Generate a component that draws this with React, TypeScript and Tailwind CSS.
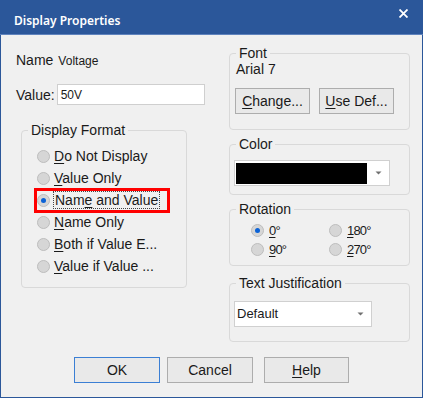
import React from "react";

const U = ({ c }: { c: string }) => (
  <span className="underline underline-offset-2 decoration-1">{c}</span>
);

function Radio({ checked }: { checked?: boolean }) {
  return (
    <span className="w-[13px] h-[13px] rounded-full border border-[#bdbdbd] bg-[#d6d6d6] flex items-center justify-center shrink-0">
      {checked && <span className="w-[5px] h-[5px] rounded-full bg-[#0b62d6]" />}
    </span>
  );
}

function Arrow() {
  return (
    <svg width="7" height="4" viewBox="0 0 7 4" className="shrink-0">
      <path d="M0.5 0.5 L6.5 0.5 L3.5 3.5 Z" fill="#707070" />
    </svg>
  );
}

function Group({
  title,
  className,
  inner,
  children,
}: {
  title: string;
  className: string;
  inner: string;
  children: React.ReactNode;
}) {
  return (
    <fieldset className={"border border-[#d9d9d9] rounded-[4px] " + className}>
      <legend className="ml-[6px] px-[3px] leading-[14px] text-[14px] text-[#1a1a1a]">{title}</legend>
      <div className={inner}>{children}</div>
    </fieldset>
  );
}

function Btn({ children, w, cls }: { children: React.ReactNode; w: string; cls?: string }) {
  return (
    <div
      className={
        "h-[26px] flex items-center justify-center text-[14px] leading-[16px] text-[#1a1a1a] bg-[#e9e9e9] " +
        w +
        " " +
        (cls ?? "border border-[#adadad]")
      }
    >
      {children}
    </div>
  );
}

export default function App() {
  const rows: { label: React.ReactNode; checked?: boolean; focus?: boolean }[] = [
    { label: <><U c="D" />o Not Display</> },
    { label: <><U c="V" />alue Only</> },
    { label: <>Nam<U c="e" /> and Value</>, checked: true, focus: true },
    { label: <><U c="N" />ame Only</> },
    { label: <><U c="B" />oth if Value E...</> },
    { label: <><U c="V" />alue if Value ...</> },
  ];
  return (
    <div className="w-[423px] h-[398px] bg-[#2b579a] flex flex-col font-['Liberation_Sans',Arial,sans-serif]">
      <div className="h-[34px] flex justify-between text-white shrink-0">
        <div className="pl-[14px] pt-[13px] text-[12px] leading-[16px] font-semibold font-['Noto_Sans',sans-serif]">Display Properties</div>
        <svg className="mt-[9px] mr-[15px]" width="9" height="9" viewBox="0 0 9 9">
          <path d="M0.5 0.5 L8.5 8.5 M8.5 0.5 L0.5 8.5" stroke="white" strokeWidth="1.8" />
        </svg>
      </div>
      <div className="h-[1px] bg-[#5f83bd] shrink-0" />
      <div className="flex-1 mx-[1px] mb-[1px] bg-[#f0f0f0] flex flex-col text-[#1a1a1a]">
        <div className="h-[322px] flex pt-[10px] shrink-0">
          {/* Left column */}
          <div className="w-[191px] ml-[15px] mt-[7px] flex flex-col">
            <div className="h-[16px] flex items-baseline leading-[16px]">
              <span className="text-[14px]">Name</span>
              <span className="text-[12px] ml-[5px]">Voltage</span>
            </div>
            <div className="mt-[16px] h-[21px] flex items-center">
              <span className="text-[14px] leading-[16px]">Value:</span>
              <div className="ml-[2px] w-[148px] h-[21px] border border-[#cfcfcf] bg-white text-[12px] pl-[3px] flex items-center">
                50V
              </div>
            </div>
            <Group title="Display Format" className="mt-[18px] ml-[5px] w-[166px] h-[165px]" inner="pl-[15px] pt-[8px]">
              {rows.map((r, i) => (
                <div key={i} className="relative h-[22px] flex items-center gap-[4px] text-[14px] leading-[16px]">
                  <Radio checked={r.checked} />
                  {r.focus ? (
                    <span className="outline outline-1 outline-dotted outline-[#444] px-[1px]">{r.label}</span>
                  ) : (
                    <span>{r.label}</span>
                  )}
                  {r.focus && (
                    <div className="absolute left-[-3px] top-[-1px] w-[136px] h-[25px] border-[3px] border-[#ff0000]" />
                  )}
                </div>
              ))}
            </Group>
          </div>
          {/* Right column */}
          <div className="ml-[22px] w-[181px] flex flex-col">
            <Group title="Font" className="mt-[1px] h-[84px]" inner="pl-[5px] pt-[1px]">
              <div className="ml-[1px] h-[16px] leading-[16px] text-[14px]">Arial 7</div>
              <div className="mt-[11px] flex gap-[9px]">
                <Btn w="w-[75px]"><U c="C" />hange...</Btn>
                <Btn w="w-[75px]"><U c="U" />se Def...</Btn>
              </div>
            </Group>
            <Group title="Color" className="mt-[7px] h-[58px]" inner="pt-[9px] pl-[4px]">
              <div className="w-[156px] h-[26px] bg-white border border-[#d0d0d0] flex items-center">
                <div className="ml-[1px] w-[131px] h-[21px] bg-black" />
                <div className="flex-1 flex justify-center">
                  <Arrow />
                </div>
              </div>
            </Group>
            <Group title="Rotation" className="mt-[7px] h-[64px]" inner="pt-[5px] pl-[21px]">
              <div className="grid grid-cols-[78px_1fr] text-[13px] leading-[14px] tracking-[-0.8px]">
                <div className="h-[19px] flex items-center gap-[5px]"><Radio checked /><span><U c="0" />°</span></div>
                <div className="h-[19px] flex items-center gap-[5px]"><Radio /><span><U c="1" />80°</span></div>
                <div className="h-[19px] flex items-center gap-[5px]"><Radio /><span><U c="9" />0°</span></div>
                <div className="h-[19px] flex items-center gap-[5px]"><Radio /><span><U c="2" />70°</span></div>
              </div>
            </Group>
            <Group title="Text Justification" className="mt-[10px] h-[66px]" inner="pt-[11px] pl-[4px]">
              <div className="w-[138px] h-[26px] bg-white border border-[#d0d0d0] flex items-center justify-between pl-[2px] pr-[7px] text-[13px]">
                <span>Default</span>
                <Arrow />
              </div>
            </Group>
          </div>
        </div>
        <div className="flex ml-[73px]">
          <Btn w="w-[86px]" cls="border border-[#3b7fd4]">OK</Btn>
          <div className="ml-[7px]">
            <Btn w="w-[86px]">Cancel</Btn>
          </div>
          <div className="ml-[11px]">
            <Btn w="w-[85px]"><U c="H" />elp</Btn>
          </div>
        </div>
      </div>
    </div>
  );
}
